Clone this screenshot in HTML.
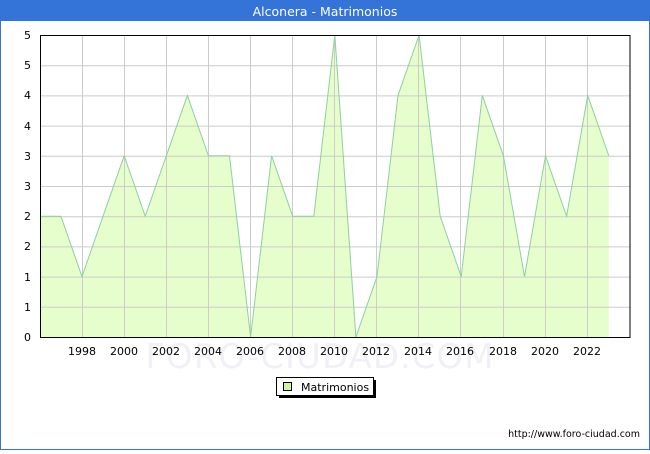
<!DOCTYPE html>
<html><head><meta charset="utf-8"><style>
html,body{margin:0;padding:0;background:#fff}
body{width:650px;height:450px;overflow:hidden;font-family:"DejaVu Sans","Liberation Sans",sans-serif}
</style></head><body>
<svg width="650" height="450" xmlns="http://www.w3.org/2000/svg" font-family="DejaVu Sans, Liberation Sans, sans-serif">
<rect x="0.5" y="0.5" width="649" height="449" fill="#fff" stroke="#3473d8"/>
<rect x="0" y="0" width="650" height="21" fill="#3473d8"/>
<text x="325" y="16" font-size="12.5" fill="#fff" text-anchor="middle">Alconera - Matrimonios</text>
<text x="320" y="368" font-size="34" fill="#f0f0f6" text-anchor="middle" letter-spacing="1">FORO-CIUDAD.COM</text>
<polygon fill="#e6fdcc" points="40.5,337 40.5,216.2 60.9,216.2 82,276.6 103,216.2 124.2,155.8 145.2,216.2 166.3,155.8 187.4,95.4 208.4,155.8 229.5,155.8 250.6,337 271.6,155.8 292.7,216.2 313.8,216.2 334.8,35 355.9,337 377,276.6 398,95.4 419.1,35 440.2,216.2 461.2,276.6 482.3,95.4 503.4,155.8 524.5,276.6 545.5,155.8 566.6,216.2 587.7,95.4 608.8,155.8 608.8,337"/>
<g stroke="#cccccc" stroke-width="1">
<line x1="40" x2="630" y1="65.7" y2="65.7"/><line x1="40" x2="630" y1="95.9" y2="95.9"/><line x1="40" x2="630" y1="126.1" y2="126.1"/><line x1="40" x2="630" y1="156.3" y2="156.3"/><line x1="40" x2="630" y1="186.5" y2="186.5"/><line x1="40" x2="630" y1="216.7" y2="216.7"/><line x1="40" x2="630" y1="246.9" y2="246.9"/><line x1="40" x2="630" y1="277.1" y2="277.1"/><line x1="40" x2="630" y1="307.3" y2="307.3"/>
<line x1="82.5" x2="82.5" y1="35" y2="337"/><line x1="124.5" x2="124.5" y1="35" y2="337"/><line x1="166.5" x2="166.5" y1="35" y2="337"/><line x1="208.5" x2="208.5" y1="35" y2="337"/><line x1="250.5" x2="250.5" y1="35" y2="337"/><line x1="292.5" x2="292.5" y1="35" y2="337"/><line x1="334.5" x2="334.5" y1="35" y2="337"/><line x1="376.5" x2="376.5" y1="35" y2="337"/><line x1="418.5" x2="418.5" y1="35" y2="337"/><line x1="460.5" x2="460.5" y1="35" y2="337"/><line x1="503.5" x2="503.5" y1="35" y2="337"/><line x1="545.5" x2="545.5" y1="35" y2="337"/><line x1="587.5" x2="587.5" y1="35" y2="337"/>
</g>
<polyline fill="none" stroke="#8fcf9f" stroke-width="1" points="40.5,216.2 60.9,216.2 82,276.6 103,216.2 124.2,155.8 145.2,216.2 166.3,155.8 187.4,95.4 208.4,155.8 229.5,155.8 250.6,337 271.6,155.8 292.7,216.2 313.8,216.2 334.8,35 355.9,337 377,276.6 398,95.4 419.1,35 440.2,216.2 461.2,276.6 482.3,95.4 503.4,155.8 524.5,276.6 545.5,155.8 566.6,216.2 587.7,95.4 608.8,155.8"/>
<rect x="40.5" y="35.5" width="589.5" height="302" fill="none" stroke="#000" stroke-width="1"/>
<g font-size="11" fill="#000" text-anchor="end">
<text x="31" y="341">0</text><text x="31" y="311">1</text><text x="31" y="281">1</text><text x="31" y="250">2</text><text x="31" y="220">2</text><text x="31" y="190">3</text><text x="31" y="160">3</text><text x="31" y="130">4</text><text x="31" y="99">4</text><text x="31" y="69">5</text><text x="31" y="39">5</text>
</g>
<g font-size="11" fill="#000" text-anchor="middle">
<text x="82" y="355">1998</text><text x="124" y="355">2000</text><text x="166" y="355">2002</text><text x="208" y="355">2004</text><text x="250" y="355">2006</text><text x="292" y="355">2008</text><text x="334" y="355">2010</text><text x="376" y="355">2012</text><text x="418" y="355">2014</text><text x="460" y="355">2016</text><text x="503" y="355">2018</text><text x="545" y="355">2020</text><text x="587" y="355">2022</text>
</g>
<rect x="279" y="380" width="97" height="18" fill="#000"/>
<rect x="276.5" y="377.5" width="97" height="18" fill="#fff" stroke="#000"/>
<rect x="283.5" y="382.5" width="8" height="8" fill="#ccf6a4" stroke="#000"/>
<text x="301" y="391" font-size="11" fill="#000">Matrimonios</text>
<text x="640" y="437" font-size="9.5" fill="#000" text-anchor="end">http://www.foro-ciudad.com</text>
</svg>
</body></html>
